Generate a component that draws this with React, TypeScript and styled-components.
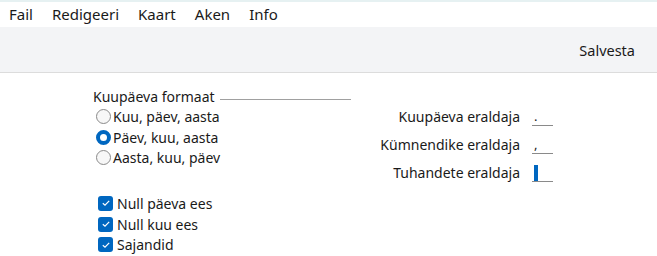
import React, { FunctionComponent } from 'react';
import styled, { createGlobalStyle } from 'styled-components';

const GlobalStyle = createGlobalStyle`
    html, body {
        margin: 0;
        padding: 0;
        background: #ffffff;
        font-family: 'Noto Sans', 'Open Sans', sans-serif;
        color: #1a1a1a;
    }
`;

const StyledWindow = styled.div`
    width: 657px;
    height: 256px;
    display: flex;
    flex-direction: column;
    border-top: 2px solid #e6f1f2;
    box-sizing: border-box;
    overflow: hidden;
`;

const StyledMenuBar = styled.div`
    display: flex;
    align-items: center;
    height: 25px;
    padding-left: 9px;
    gap: 19px;
    font-size: 15px;
    background: #ffffff;
`;

const StyledMenuItem = styled.span`
    line-height: 25px;
`;

const StyledToolbar = styled.div`
    display: flex;
    align-items: center;
    justify-content: flex-end;
    height: 45px;
    padding-right: 22px;
    background: #f3f4f6;
    border-bottom: 1px solid #dcdcdc;
    font-size: 14.5px;
`;

const StyledContent = styled.div`
    display: flex;
    padding: 13px 0 0 93px;
    font-size: 14px;
`;

const StyledLeft = styled.div`
    display: flex;
    flex-direction: column;
    width: 258px;
`;

const StyledGroupTitle = styled.div`
    display: flex;
    align-items: center;
    gap: 5px;
    height: 20px;

    &::after {
        content: '';
        flex: 1;
        height: 1px;
        margin-top: 7px;
        background: #a0a0a0;
    }
`;

const StyledOption = styled.label`
    display: flex;
    align-items: center;
    height: 20.7px;
    gap: 2px;
`;

interface IStyledRadio {
    readonly checked: boolean;
}

const StyledRadio = styled.span<IStyledRadio>`
    box-sizing: border-box;
    width: 15px;
    height: 15px;
    margin-left: 3px;
    border-radius: 50%;
    ${({ checked }) =>
        checked
            ? `
        border: 4px solid #0067c0;
        background: #ffffff;
    `
            : `
        border: 1px solid #8a8a8a;
        background: #f7f7f7;
    `}
`;

const StyledChecks = styled.div`
    display: flex;
    flex-direction: column;
    margin-top: 25px;
`;

const StyledCheckbox = styled.span`
    display: flex;
    align-items: center;
    justify-content: center;
    width: 15px;
    height: 15px;
    margin-left: 5px;
    margin-right: 2px;
    border-radius: 3px;
    background: #0067c0;
`;

const StyledRight = styled.div`
    display: grid;
    grid-template-columns: 169px 21px;
    column-gap: 12px;
    row-gap: 8px;
    margin-top: 21px;
    align-content: start;
`;

const StyledFieldLabel = styled.div`
    text-align: right;
    height: 20px;
    line-height: 20px;
`;

const StyledField = styled.div`
    height: 16px;
    margin-top: 2px;
    border-bottom: 1px solid #8a8a8a;
    font-size: 13px;
    line-height: 14px;
    padding-left: 2px;
`;

const StyledCaret = styled.span`
    display: block;
    width: 4px;
    height: 16px;
    background: #0067c0;
`;

const CheckIcon: FunctionComponent = () => (
    <svg width='10' height='10' viewBox='0 0 10 10'>
        <path d='M1.8 5.2 L4 7.2 L8.2 2.8' fill='none' stroke='#ffffff' strokeWidth='1.2' />
    </svg>
);

const App: FunctionComponent = () => {
    const formats = ['Kuu, päev, aasta', 'Päev, kuu, aasta', 'Aasta, kuu, päev'];
    const checks = ['Null päeva ees', 'Null kuu ees', 'Sajandid'];

    return (
        <StyledWindow>
            <GlobalStyle />
            <StyledMenuBar>
                <StyledMenuItem>Fail</StyledMenuItem>
                <StyledMenuItem>Redigeeri</StyledMenuItem>
                <StyledMenuItem>Kaart</StyledMenuItem>
                <StyledMenuItem>Aken</StyledMenuItem>
                <StyledMenuItem>Info</StyledMenuItem>
            </StyledMenuBar>
            <StyledToolbar>Salvesta</StyledToolbar>
            <StyledContent>
                <StyledLeft>
                    <StyledGroupTitle>Kuupäeva formaat</StyledGroupTitle>
                    {formats.map((f, i) => (
                        <StyledOption key={f}>
                            <StyledRadio checked={i === 1} />
                            {f}
                        </StyledOption>
                    ))}
                    <StyledChecks>
                        {checks.map((c) => (
                            <StyledOption key={c}>
                                <StyledCheckbox>
                                    <CheckIcon />
                                </StyledCheckbox>
                                {c}
                            </StyledOption>
                        ))}
                    </StyledChecks>
                </StyledLeft>
                <StyledRight>
                    <StyledFieldLabel>Kuupäeva eraldaja</StyledFieldLabel>
                    <StyledField>.</StyledField>
                    <StyledFieldLabel>Kümnendike eraldaja</StyledFieldLabel>
                    <StyledField>,</StyledField>
                    <StyledFieldLabel>Tuhandete eraldaja</StyledFieldLabel>
                    <StyledField>
                        <StyledCaret />
                    </StyledField>
                </StyledRight>
            </StyledContent>
        </StyledWindow>
    );
};

export default App;
